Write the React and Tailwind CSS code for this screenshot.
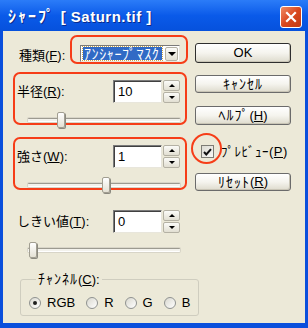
import React from "react";

// XP style "Sharpen" dialog

const red = "border-[#f63d18]";

// half-width katakana run a bit small in Noto, so widen them
function K({ children }) {
  return <span className="text-[14px] tracking-[1px]">{children}</span>;
}

function XpButton({ children, def = false, className = "" }) {
  return (
    <div
      className={
        "w-[96px] flex items-center justify-center whitespace-nowrap rounded-[3px] bg-linear-to-b from-[#ffffff] via-[#f5f4ee] to-[#dedbcd] text-[13px] text-black shadow-[inset_-1px_-1px_0_#c9c5b6] " +
        (def ? "border border-[#2e2e2e] " : "border border-[#6b6b6b] ") +
        className
      }
    >
      {children}
    </div>
  );
}

function Spinner() {
  const btn =
    "w-[17px] h-[11px] flex items-center justify-center rounded-[2px] border border-[#b4b1a4] bg-linear-to-b from-[#fbfbf8] to-[#e2dfd2]";
  return (
    <div className="flex flex-col gap-[1px] ml-[1px]">
      <div className={btn}>
        <div className="w-0 h-0 border-l-[3px] border-r-[3px] border-b-[3px] border-l-transparent border-r-transparent border-b-black" />
      </div>
      <div className={btn}>
        <div className="w-0 h-0 border-l-[3px] border-r-[3px] border-t-[3px] border-l-transparent border-r-transparent border-t-black" />
      </div>
    </div>
  );
}

function NumField({ value }) {
  return (
    <div className="flex items-center">
      <div className="w-[49px] h-[23px] bg-white border border-t-[#7a7a7a] border-l-[#7a7a7a] border-b-[#e8e6dc] border-r-[#e8e6dc] shadow-[inset_1px_1px_0_#404040] flex items-center pl-[4px] text-[13px] text-black">
        {value}
      </div>
      <Spinner />
    </div>
  );
}

function Slider({ thumb }) {
  return (
    <div className="relative w-[152px] h-[16px] flex items-center">
      <div className="w-full h-[4px] bg-[#f3f2ec] border-t border-t-[#9c9a90] border-b border-b-white rounded-[1px] shadow-[0_0_0_1px_#d8d5c8]" />
      <div
        className={
          "absolute top-0 w-[8px] h-[16px] rounded-[2px] border border-[#a19e91] bg-linear-to-b from-[#ffffff] to-[#e4e1d4] shadow-[1px_1px_0_#8b897f] " +
          thumb
        }
      />
    </div>
  );
}

function Field({ label, value, thumb, boxed = true, className = "" }) {
  return (
    <div
      className={
        "ml-[10px] w-[174px] h-[53px] shrink-0 border-2 rounded-[7px] flex flex-col pl-[2px] pr-[5px] pt-[6px] " +
        (boxed ? red + " " : "border-transparent ") +
        className
      }
    >
      <div className="flex items-center justify-between h-[23px] shrink-0">
        <span className="text-[13px] text-black">{label}</span>
        <NumField value={value} />
      </div>
      <div className="ml-[11px] mt-[9px] shrink-0">
        <Slider thumb={thumb} />
      </div>
    </div>
  );
}

function Radio({ checked, label }) {
  return (
    <div className="flex items-center">
      <div className="w-[12px] h-[12px] rounded-full border border-[#8f9290] bg-linear-to-br from-[#d9d8cf] to-[#ffffff] flex items-center justify-center">
        {checked && <div className="w-[4px] h-[4px] rounded-full bg-[#1e1e1e]" />}
      </div>
      <span className="ml-[6px] text-[13px] text-black">{label}</span>
    </div>
  );
}

export default function App() {
  return (
    <div className="w-[308px] h-[328px] flex flex-col bg-[#0a4fdc] font-['Liberation_Sans','Noto_Sans_CJK_JP',sans-serif] select-none">
      {/* title bar */}
      <div className="h-[31px] shrink-0 flex items-center justify-between pl-[8px] pr-[6px] bg-linear-to-b from-[#2b7cf8] via-[#0a5ae9] to-[#0651dc]">
        <span className="text-white font-bold text-[15px] tracking-[0.5px] pt-[2px] [text-shadow:1px_1px_0_#0a2a8a]">
          <span className="text-[16px] tracking-[2px]">ｼｬｰﾌﾟ</span> [ Saturn.tif ]
        </span>
        <div className="w-[22px] h-[22px] mt-[3px] rounded-[3px] border border-white bg-linear-to-br from-[#f08a63] via-[#d9471e] to-[#c23b14] flex items-center justify-center">
          <svg width="12" height="12" viewBox="0 0 12 12">
            <path d="M2 2 L10 10 M10 2 L2 10" stroke="white" strokeWidth="2.2" strokeLinecap="square" />
          </svg>
        </div>
      </div>

      {/* client area */}
      <div className="mx-[3px] mb-[5px] flex-1 bg-[#ece9d8] flex flex-col">
        <div className="flex">
          {/* left column */}
          <div className="w-[186px] flex flex-col">
            <div className="flex items-end mt-[4px] h-[29px]">
              <span className="pl-[16px] w-[67px] h-[17px] flex items-center text-[13px] text-black">
                種類(<u>F</u>):
              </span>
              <div className={"w-[118px] h-[29px] border-2 rounded-[7px] flex items-end pl-[8px] " + red}>
                <div className="w-[100px] h-[17px] flex items-center bg-white border border-t-[#7a7a7a] border-l-[#7a7a7a] border-b-[#e8e6dc] border-r-[#e8e6dc]">
                  <div className="flex-1 h-[13px] ml-[2px] bg-[#316ac5] outline-1 outline-dotted outline-[#c9a64a] flex items-center pl-[1px] text-white text-[14px] tracking-[0.6px] leading-none overflow-hidden whitespace-nowrap">
                    ｱﾝｼｬｰﾌﾟﾏｽｸ
                  </div>
                  <div className="w-[13px] h-[14px] ml-[3px] mr-[1px] rounded-[2px] border border-[#b4b1a4] bg-linear-to-b from-[#fbfbf8] to-[#e2dfd2] flex items-center justify-center">
                    <div className="w-0 h-0 border-l-[4px] border-r-[4px] border-t-[4px] border-l-transparent border-r-transparent border-t-black" />
                  </div>
                </div>
              </div>
            </div>

            <Field label={<>半径(<u>R</u>):</>} value="10" thumb="left-[29px]" className="mt-[8px]" />
            <Field label={<>強さ(<u>W</u>):</>} value="1" thumb="left-[74px]" className="mt-[12px]" />
            <Field label={<>しきい値(<u>T</u>):</>} value="0" thumb="left-[1px]" boxed={false} className="mt-[12px]" />
          </div>

          {/* right column */}
          <div className="ml-[6px] w-[96px] flex flex-col">
            <XpButton def className="mt-[12px] h-[20px]">OK</XpButton>
            <XpButton className="mt-[12px] h-[18px]">
              <K>ｷｬﾝｾﾙ</K>
            </XpButton>
            <XpButton className="mt-[13px] h-[19px]">
              <K>ﾍﾙﾌﾟ</K>(<u>H</u>)
            </XpButton>
            <div className="flex items-center mt-[20px] pl-[6px] h-[13px] whitespace-nowrap">
              <div className="relative w-[13px] h-[13px] shrink-0 border border-[#7d7c75] bg-linear-to-br from-[#dcdbd3] to-[#f8f8f5] flex items-center justify-center">
                <svg width="9" height="8" viewBox="0 0 9 8">
                  <path d="M1 4 L3.3 6.5 L8 1.2" stroke="#111" strokeWidth="2" fill="none" />
                </svg>
                <div className="absolute -left-[11px] -top-[13px] w-[31px] h-[31px] rounded-full border-2 border-[#f63d18]" />
              </div>
              <span className="ml-[7px] text-[13px] tracking-[0.5px] text-black">
                ﾌﾟﾚﾋﾞｭｰ(<u>P</u>)
              </span>
            </div>
            <XpButton className="mt-[15px] h-[18px]">
              <K>ﾘｾｯﾄ</K>(<u>R</u>)
            </XpButton>
          </div>
        </div>

        {/* channel group */}
        <fieldset className="ml-[17px] mt-[16px] w-[179px] border border-[#cfcdbf] rounded-[3px] pl-[8px] pt-[8px] pb-[5px]">
          <legend className="ml-[7px] px-[2px] text-[13px] leading-[16px] text-black">
            <K>ﾁｬﾝﾈﾙ</K>(<u>C</u>):
          </legend>
          <div className="flex items-center gap-[11px] h-[14px]">
            <Radio checked label="RGB" />
            <Radio label="R" />
            <Radio label="G" />
            <Radio label="B" />
          </div>
        </fieldset>
      </div>
    </div>
  );
}
